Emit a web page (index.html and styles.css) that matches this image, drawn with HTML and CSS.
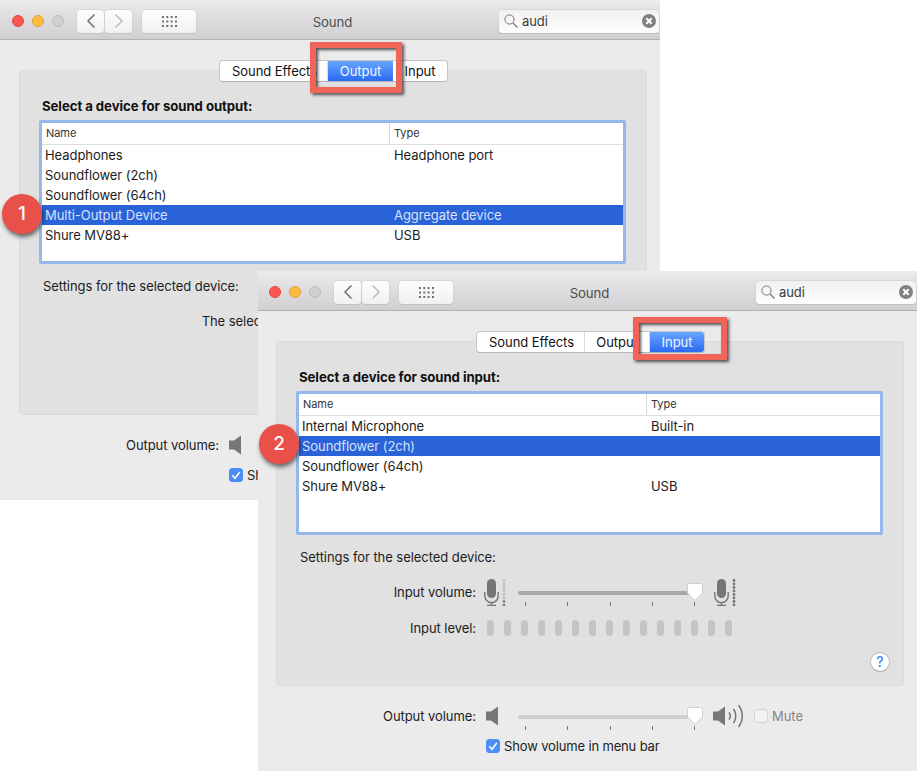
FILE: index.html
```html
<!DOCTYPE html>
<html lang="en">
<head>
<meta charset="utf-8">
<title>Sound preferences</title>
<link rel="stylesheet" href="styles.css">
</head>
<body>
<svg class="defs" aria-hidden="true">
  <symbol id="back" viewBox="0 0 10 16"><path d="M8.5 1.5 2 8l6.500 6.500" fill="none" stroke="currentColor" stroke-width="1.500"/></symbol>
  <symbol id="grid" viewBox="0 0 15 11">
    <g fill="#707070">
      <rect x="0" y="0" width="2" height="2"/><rect x="4.300" y="0" width="2" height="2"/><rect x="8.600" y="0" width="2" height="2"/><rect x="13" y="0" width="2" height="2"/>
      <rect x="0" y="4.500" width="2" height="2"/><rect x="4.300" y="4.500" width="2" height="2"/><rect x="8.600" y="4.500" width="2" height="2"/><rect x="13" y="4.500" width="2" height="2"/>
      <rect x="0" y="9" width="2" height="2"/><rect x="4.300" y="9" width="2" height="2"/><rect x="8.600" y="9" width="2" height="2"/><rect x="13" y="9" width="2" height="2"/>
    </g>
  </symbol>
  <symbol id="glass" viewBox="0 0 14 14"><circle cx="5.500" cy="5.500" r="4.600" fill="none" stroke="#777" stroke-width="1"/><path d="M9 9l4.500 4.500" stroke="#777" stroke-width="1.200"/></symbol>
  <symbol id="clear" viewBox="0 0 14 14"><circle cx="7" cy="7" r="7" fill="#808080"/><path d="M4.300 4.300l5.400 5.400M9.700 4.300l-5.400 5.400" stroke="#fff" stroke-width="2"/></symbol>
  <symbol id="thumb" viewBox="0 0 16 18"><path d="M2.500.5h11a2 2 0 0 1 2 2V10L8 17.500.5 10V2.500a2 2 0 0 1 2-2z" fill="#fff" stroke="#cfcfcf"/></symbol>
  <symbol id="mic" viewBox="0 0 15 28">
    <rect x="3" y="1" width="9" height="19" rx="4.500" fill="#757575"/>
    <path d="M.8 14v4a6.700 6.700 0 0 0 13.400 0v-4M7.500 24.500V28M3 27.500h9" fill="none" stroke="#757575" stroke-width="1.400"/>
  </symbol>
  <symbol id="dots-low" viewBox="0 0 4 28">
    <g fill="none" stroke="#a8a8a8" stroke-width=".8"><circle cx="2" cy="2.500" r="1"/><circle cx="2" cy="6" r="1"/><circle cx="2" cy="9.500" r="1"/><circle cx="2" cy="13" r="1"/><circle cx="2" cy="16.500" r="1"/><circle cx="2" cy="20" r="1"/></g>
    <circle cx="2" cy="23.500" r="1.300" fill="#777"/><circle cx="2" cy="27" r="1.300" fill="#777"/>
  </symbol>
  <symbol id="dots-high" viewBox="0 0 4 28">
    <g fill="#777"><circle cx="2" cy="2.500" r="1.400"/><circle cx="2" cy="6" r="1.400"/><circle cx="2" cy="9.500" r="1.400"/><circle cx="2" cy="13" r="1.400"/><circle cx="2" cy="16.500" r="1.400"/><circle cx="2" cy="20" r="1.400"/><circle cx="2" cy="23.500" r="1.400"/><circle cx="2" cy="27" r="1.400"/></g>
  </symbol>
  <symbol id="spk" viewBox="0 0 12 20"><path d="M0 5.500h5L12 .5v19l-7-5H0z" fill="#777"/></symbol>
  <symbol id="spk-loud" viewBox="0 0 32 26">
    <path d="M0 8.500h5l7-5v19l-7-5H0z" fill="#777"/>
    <path d="M16 9.500c1.500 2 1.500 5 0 7M20.500 6c3 4 3 10 0 14M25.500 2c5 6.500 5 15.500 0 22" fill="none" stroke="#777" stroke-width="1.500"/>
  </symbol>
  <symbol id="check" viewBox="0 0 14 14"><path d="M3.300 7.200l2.700 3 4.800-6.200" fill="none" stroke="#fff" stroke-width="1.600"/></symbol>
</svg>

<main class="desktop">
  <section class="window window-output">
    <header class="titlebar">
      <div class="tools">
        <span class="light red"></span><span class="light yellow"></span><span class="light off"></span>
        <div class="nav">
          <button class="btn nav-btn"><svg class="chev"><use href="#back"/></svg></button>
          <button class="btn nav-btn dim"><svg class="chev flip"><use href="#back"/></svg></button>
        </div>
        <button class="btn grid-btn"><svg class="grid-ico"><use href="#grid"/></svg></button>
      </div>
      <h1 class="title">Sound</h1>
      <div class="search">
        <svg class="glass"><use href="#glass"/></svg><span class="query">audi</span><svg class="clear"><use href="#clear"/></svg>
      </div>
    </header>
    <div class="tabs">
      <span class="tab tab-a">Sound Effects</span><span class="tab tab-b on">Output</span><span class="tab tab-c">Input</span>
    </div>
    <div class="panel">
      <h2 class="heading">Select a device for sound output:</h2>
      <div class="list">
        <div class="row head"><span>Name</span><span class="type">Type</span></div>
        <div class="row"><span>Headphones</span><span class="type">Headphone port</span></div>
        <div class="row"><span>Soundflower (2ch)</span><span class="type"></span></div>
        <div class="row"><span>Soundflower (64ch)</span><span class="type"></span></div>
        <div class="row sel"><span>Multi-Output Device</span><span class="type">Aggregate device</span></div>
        <div class="row"><span>Shure MV88+</span><span class="type">USB</span></div>
      </div>
      <p class="settings">Settings for the selected device:</p>
      <p class="none">The selected device has no output controls</p>
    </div>
    <footer class="footer">
      <div class="ctl">
        <span class="label">Output volume:</span>
        <svg class="spk"><use href="#spk"/></svg>
      </div>
      <div class="show"><span class="box checked"><svg class="check"><use href="#check"/></svg></span><span class="show-text">Show volume in menu bar</span></div>
    </footer>
  </section>

  <div class="mark mark-output"></div>
  <div class="badge badge-1">1</div>

  <section class="window window-input">
    <header class="titlebar">
      <div class="tools">
        <span class="light red"></span><span class="light yellow"></span><span class="light off"></span>
        <div class="nav">
          <button class="btn nav-btn"><svg class="chev"><use href="#back"/></svg></button>
          <button class="btn nav-btn dim"><svg class="chev flip"><use href="#back"/></svg></button>
        </div>
        <button class="btn grid-btn"><svg class="grid-ico"><use href="#grid"/></svg></button>
      </div>
      <h1 class="title">Sound</h1>
      <div class="search">
        <svg class="glass"><use href="#glass"/></svg><span class="query">audi</span><svg class="clear"><use href="#clear"/></svg>
      </div>
    </header>
    <div class="tabs">
      <span class="tab tab-a">Sound Effects</span><span class="tab tab-b">Output</span><span class="tab tab-c on">Input</span>
    </div>
    <div class="panel">
      <h2 class="heading">Select a device for sound input:</h2>
      <div class="list">
        <div class="row head"><span>Name</span><span class="type">Type</span></div>
        <div class="row"><span>Internal Microphone</span><span class="type">Built-in</span></div>
        <div class="row sel"><span>Soundflower (2ch)</span><span class="type"></span></div>
        <div class="row"><span>Soundflower (64ch)</span><span class="type"></span></div>
        <div class="row"><span>Shure MV88+</span><span class="type">USB</span></div>
      </div>
      <p class="settings">Settings for the selected device:</p>
      <div class="ctl in-panel">
        <span class="label">Input volume:</span>
        <svg class="mic"><use href="#mic"/></svg>
        <svg class="dots"><use href="#dots-low"/></svg>
        <div class="slider">
          <span class="ticks"><i></i><i></i><i></i><i></i><i></i></span>
          <svg class="thumb"><use href="#thumb"/></svg>
        </div>
        <svg class="mic"><use href="#mic"/></svg>
        <svg class="dots"><use href="#dots-high"/></svg>
      </div>
      <div class="ctl in-panel level">
        <span class="label">Input level:</span>
        <div class="pills"><i></i><i></i><i></i><i></i><i></i><i></i><i></i><i></i><i></i><i></i><i></i><i></i><i></i><i></i><i></i></div>
      </div>
      <div class="help-row"><span class="help">?</span></div>
    </div>
    <footer class="footer">
      <div class="ctl">
        <span class="label">Output volume:</span>
        <svg class="spk"><use href="#spk"/></svg>
        <div class="slider light-track">
          <span class="ticks"><i></i><i></i><i></i><i></i><i></i></span>
          <svg class="thumb"><use href="#thumb"/></svg>
        </div>
        <svg class="spk-loud"><use href="#spk-loud"/></svg>
        <span class="box"></span><span class="mute">Mute</span>
      </div>
      <div class="show"><span class="box checked"><svg class="check"><use href="#check"/></svg></span><span class="show-text">Show volume in menu bar</span></div>
    </footer>
  </section>

  <div class="mark mark-input"></div>
  <div class="badge badge-2">2</div>
</main>
</body>
</html>
```

FILE: styles.css
```css
* { box-sizing: border-box; }
html, body { margin: 0; padding: 0; background: #fff; }
body { font-family: Inter, "Liberation Sans", sans-serif; font-size: 13px; letter-spacing: -.06px; color: #1c1c1c; overflow: hidden; }
.defs { position: absolute; width: 0; height: 0; }
.desktop { position: relative; width: 917px; height: 779px; overflow: hidden; }

.window { position: absolute; width: 660px; height: 500px; background: #ebebeb; padding-top: 3px; }
.window-output { left: 0; top: 0; }
.window-input { left: 257px; top: 271px; clip-path: inset(0 0 0 1px); }

.titlebar {
  height: 37px; border-bottom: 1px solid #b1b1b1;
  background: linear-gradient(#e9e8e9, #d1cfd1);
  display: grid; grid-template-columns: 1fr auto 1fr; align-items: center; padding: 0 1px 0 12px;
}
.tools { display: flex; align-items: center; }
.light { width: 12px; height: 12px; border-radius: 50%; margin-right: 8px; border: 1px solid transparent; }
.red { background: #fc5753; border-color: #df4744; }
.yellow { background: #fdbc40; border-color: #de9f34; }
.off { background: #cfcfcf; border-color: #bcbcbc; margin-right: 13px; }
.nav { display: flex; gap: 1px; margin-right: 10px; }
.btn {
  display: flex; align-items: center; justify-content: center; padding: 0; height: 23px;
  background: linear-gradient(#fdfdfd, #f1f1f1); border: 0; border-radius: 4px;
  box-shadow: 0 0 0 .5px #c9c9c9, 0 1px 0 #bdbdbd; color: #707070;
}
.nav-btn { width: 27px; }
.dim { color: #bdbdbd; }
.grid-btn { width: 54px; }
.chev { width: 10px; height: 16px; }
.flip { transform: scaleX(-1); }
.grid-ico { width: 15px; height: 11px; }
.title { margin: 0; padding: 2px 6px 0 0; font-size: 13.200px; font-weight: 400; color: #4e4e4e; }
.search {
  justify-self: end; width: 160px; height: 23px; display: flex; align-items: center; padding: 0 3px 0 5px;
  background: linear-gradient(#f1f1f1, #fdfdfd); border-radius: 4px;
  box-shadow: 0 0 0 .5px #c9c9c9, 0 1px 0 #b5b5b5;
}
.glass { width: 14px; height: 14px; margin-right: 4px; }
.query { flex: 1; color: #3a3a3a; font-size: 13px; }
.clear { width: 14px; height: 14px; }

.tabs {
  position: relative; width: 229px; height: 22px; margin: 20px 0 0 219px; display: flex;
  background: #fff; border: 1px solid #c6c6c6; border-bottom-color: #b4b4b4; border-radius: 4px; line-height: 20px;
}
.tab { text-align: center; color: #111; white-space: nowrap; overflow: hidden; border-right: 1px solid #dcdcdc; }
.tab-a { width: 108px; padding-left: 2px; }
.tab-b { width: 65px; }
.tab-c { flex: 1; border-right: 0; border-radius: 0 3px 3px 0; }
.tab.on { color: #f0f5ff; background: linear-gradient(#67a5ff, #2b6af3); border-right: 0; }

.panel {
  width: 628px; height: 345px; margin: -12px 0 0 19px; padding: 27px 21px 0;
  background: #e1e1e1; border: 1px solid #dbdbdb; border-radius: 4px;
}
.heading { margin: 0 0 6px 1px; font-size: 13.200px; line-height: 16px; font-weight: 700; color: #111; }
.list { height: 144px; margin: 0 -1px 0 -2px; border: 3px solid #95b8ea; border-radius: 2px; background: #fff; }
.row { display: grid; grid-template-columns: 344px 1fr; height: 20px; line-height: 20px; padding-left: 3px; }
.type { padding-left: 5px; }
.head { height: 22px; line-height: 20px; font-size: 11px; color: #333; border-bottom: 1px solid #dedede; padding-left: 4px; }
.head .type { border-left: 1px solid #d8d8d8; margin-left: -1px; padding-left: 4px; }
.sel { background: #2a62d8; color: #d7e3fb; }
.settings { margin: 14px 0 0 2px; line-height: 16px; }
.none { margin: 19px 0 0; line-height: 16px; text-align: center; }

.ctl { display: flex; align-items: center; height: 30px; }
.label { width: 219px; text-align: right; margin-right: 10px; flex: none; }
.in-panel { margin-top: 12px; }
.in-panel .label { width: 178px; margin-right: 9px; }
.level { margin-top: 6px; }
.level .label { margin-right: 11px; }
.mic { width: 15px; height: 28px; flex: none; }
.in-panel .label + .mic { margin-left: -1px; }
.dots { width: 4px; height: 28px; margin: 0 12px 0 3px; flex: none; }
.slider { position: relative; width: 185px; height: 30px; margin-right: 10px; flex: none; }
.in-panel .slider { margin-right: 11px; }
.slider::before { content: ""; position: absolute; left: 0; right: 2px; top: 14px; height: 4px; border-radius: 2px; background: #a9a9a9; }
.light-track::before { background: #cfcfcf; }
.ticks { position: absolute; left: 7px; width: 170px; top: 25px; display: flex; justify-content: space-between; }
.ticks i { width: 1px; height: 4px; background: #777; }
.thumb { position: absolute; right: 0; top: 6px; width: 16px; height: 18px; }
.spk { width: 12px; height: 20px; margin-right: 20px; flex: none; }
.spk-loud { width: 32px; height: 26px; margin-right: 9px; flex: none; }
.mute { margin-left: 4px; color: #868686; }
.pills { display: flex; gap: 10px; }
.pills i { width: 7px; height: 16px; border-radius: 3.500px; background: #c4c4c4; }
.help-row { display: flex; justify-content: flex-end; margin: 9px -8px 0 0; }
.help {
  width: 20px; height: 20px; border-radius: 50%; background: #fff; border: 1px solid #bcbcbc; border-bottom-color: #a5a5a5;
  color: #3f86f5; font-size: 14px; font-weight: 500; line-height: 18px; text-align: center;
}

.footer { padding-top: 15px; }
.box { width: 14px; height: 14px; border-radius: 3px; background: #f2f2f2; border: 1px solid #d4d4d4; flex: none; display: block; }
.checked { background: #4b8ff6; border-color: #4b8ff6; margin-right: 4px; }
.check { display: block; width: 14px; height: 14px; margin: -1px; }
.show { display: flex; align-items: center; height: 20px; margin: 5px 0 0 229px; color: #222; white-space: nowrap; letter-spacing: -.15px; }
.window-output .show { width: 29px; overflow: hidden; }

.mark { position: absolute; border: 6px solid #f0645a; box-shadow: 2px 2px 3px rgba(0,0,0,.65), inset 2px 2px 3px rgba(0,0,0,.65); }
.mark-output { left: 310px; top: 42px; width: 92px; height: 51px; }
.mark-input { left: 633px; top: 317px; width: 94px; height: 43px; }
.badge {
  position: absolute; width: 40px; height: 40px; border-radius: 50%; background: #e9504a; color: #fff;
  font-size: 19px; font-weight: 500; line-height: 40px; text-align: center; box-shadow: 1px 3px 4px rgba(0,0,0,.55);
}
.badge-1 { left: 2px; top: 194px; }
.badge-2 { left: 259px; top: 424px; }
```
